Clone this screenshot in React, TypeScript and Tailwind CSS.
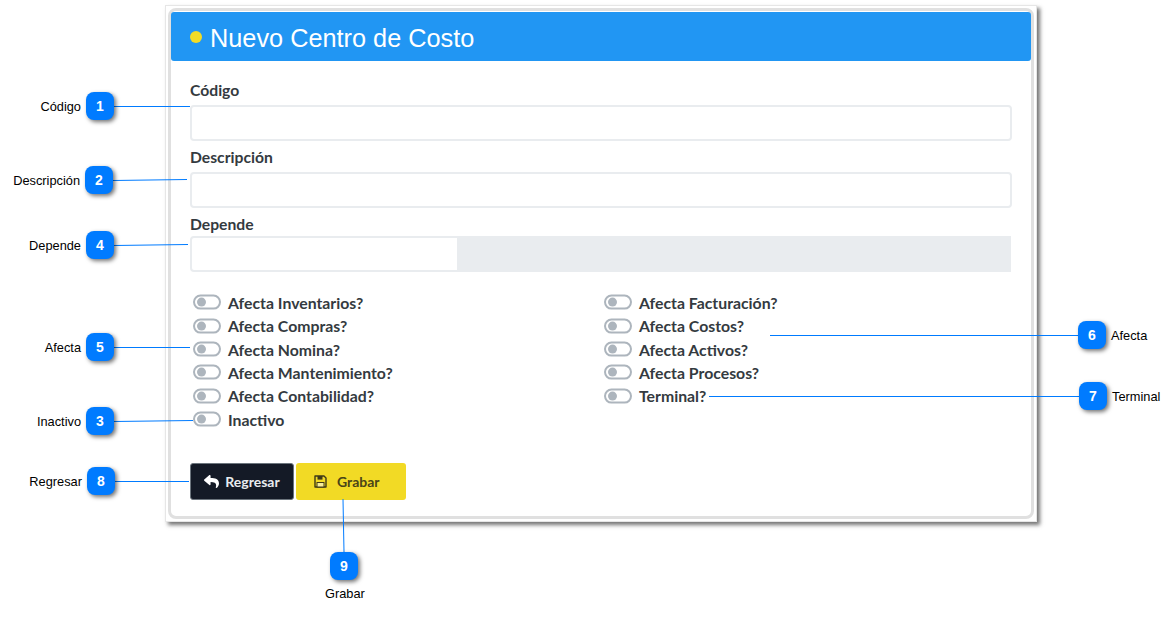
import { FaReply } from "react-icons/fa";

const lines = [
  [114, 106.5, 190, 106.5],
  [113, 180.5, 187, 179.5],
  [114, 245.5, 188, 244.5],
  [114, 347.5, 190, 347.5],
  [114, 421.5, 193, 420.5],
  [115, 481.5, 189, 481.5],
  [344, 552, 343, 499],
  [1078, 335.5, 770, 335.5],
  [1079, 396.5, 709, 396.5],
];

const badges = [
  { n: 1, c: "left-[86px] top-[92px]" },
  { n: 2, c: "left-[85px] top-[166px]" },
  { n: 4, c: "left-[86px] top-[231px]" },
  { n: 5, c: "left-[86px] top-[333px]" },
  { n: 3, c: "left-[86px] top-[407px]" },
  { n: 8, c: "left-[87px] top-[467px]" },
  { n: 9, c: "left-[330px] top-[552px]" },
  { n: 6, c: "left-[1078px] top-[321px]" },
  { n: 7, c: "left-[1079px] top-[382px]" },
];

const notes = [
  { t: "Código", c: "right-[1095px] top-[99px]" },
  { t: "Descripción", c: "right-[1096px] top-[173px]" },
  { t: "Depende", c: "right-[1095px] top-[238px]" },
  { t: "Afecta", c: "right-[1095px] top-[340px]" },
  { t: "Inactivo", c: "right-[1095px] top-[414px]" },
  { t: "Regresar", c: "right-[1094px] top-[474px]" },
  { t: "Grabar", c: "left-[325px] top-[586px]" },
  { t: "Afecta", c: "left-[1111px] top-[328px]" },
  { t: "Terminal", c: "left-[1112px] top-[389px]" },
];

const left = ["Afecta Inventarios?", "Afecta Compras?", "Afecta Nomina?", "Afecta Mantenimiento?", "Afecta Contabilidad?", "Inactivo"];
const right = ["Afecta Facturación?", "Afecta Costos?", "Afecta Activos?", "Afecta Procesos?", "Terminal?"];

function Toggle({ label }: { label: string }) {
  return (
    <div className="flex h-[23.4px] items-center">
      <span className="flex h-[15px] w-[28px] -translate-y-[0.4px] items-center rounded-full border-2 border-[#adb5bd] bg-white pl-[2px]">
        <span className="h-[9px] w-[9px] rounded-full bg-[#adb5bd]" />
      </span>
      <span className="ml-[7px] text-[15.8px] font-bold text-[#343a40]">{label}</span>
    </div>
  );
}

function Label({ text }: { text: string }) {
  return <label className="block h-[26px] pt-[5px] text-[15.7px] leading-[22px] font-bold text-[#343a40]">{text}</label>;
}

function SaveIcon() {
  return (
    <svg width="13" height="13" viewBox="0 0 13 13" fill="none" className="shrink-0">
      <path d="M1 1h9l2 2v9H1z" stroke="#3f3a18" strokeWidth="1.4" strokeLinejoin="round" />
      <rect x="3.5" y="1" width="5" height="3.6" fill="#3f3a18" />
      <rect x="3" y="7.5" width="7" height="4.5" stroke="#3f3a18" strokeWidth="1" fill="#f7ee9a" />
    </svg>
  );
}

export default function App() {
  return (
    <div className="relative h-[617px] w-[1176px] overflow-hidden bg-white font-['Lato',sans-serif]">
      <div className="ml-[165px] pt-[5px]">
        <div className="h-[517px] w-[872px] border border-[#e6e6e6] bg-white p-[2px] shadow-[3px_3px_4px_rgba(0,0,0,0.55)]">
          <div className="flex h-full w-[866px] flex-col rounded-[8px] border-[3px] border-[#e0e0e0] bg-white pt-[1px]">
            <div className="flex h-[49px] items-center rounded-[3px] bg-[#2196f3] pt-[4px] pl-[19px]">
              <span className="h-[12px] w-[12px] -translate-y-[2px] rounded-full bg-[#f2dc26]" />
              <h1 className="ml-[8px] font-['Liberation_Sans',sans-serif] text-[25.3px] text-white">Nuevo Centro de Costo</h1>
            </div>
            <div className="flex flex-1 flex-col px-[19px] pt-[13px]">
              <div className="w-[822px]">
                <Label text="Código" />
                <div className="mt-[5px] h-[36px] rounded-[4px] border-2 border-[#e9ecef] bg-white" />
                <Label text="Descripción" />
                <div className="mt-[5px] h-[36px] rounded-[4px] border-2 border-[#e9ecef] bg-white" />
                <Label text="Depende" />
                <div className="mt-[2px] flex h-[36px] w-[821px]">
                  <div className="w-[269px] shrink-0 rounded-l-[4px] border-2 border-[#e9ecef] bg-white" />
                  <div className="flex-1 bg-[#e9ecef]" />
                </div>
              </div>
              <div className="mt-[19px] grid w-[822px] grid-cols-[411px_411px]">
                <div className="pl-[3px]">
                  {left.map((l) => (
                    <Toggle key={l} label={l} />
                  ))}
                </div>
                <div className="pl-[3px]">
                  {right.map((l) => (
                    <Toggle key={l} label={l} />
                  ))}
                </div>
              </div>
              <div className="mt-[32px] flex gap-[2px]">
                <button className="flex h-[37px] w-[104px] items-center justify-center gap-[6px] rounded-[3px] border border-[#6c757d] bg-[#141a26] text-[14px] font-bold text-[#e9ecef]">
                  <FaReply className="text-[15px] text-white" />
                  Regresar
                </button>
                <button className="flex h-[37px] w-[110px] items-center gap-[10px] rounded-[3px] bg-[#f2da25] pl-[18px] text-[14px] font-bold text-[#4a4418]">
                  <SaveIcon />
                  Grabar
                </button>
              </div>
            </div>
          </div>
        </div>
      </div>

      <svg className="pointer-events-none absolute inset-0" width="1176" height="617">
        {lines.map((l, i) => (
          <line key={i} x1={l[0]} y1={l[1]} x2={l[2]} y2={l[3]} stroke="#007bff" strokeWidth="1" />
        ))}
      </svg>

      {badges.map((b) => (
        <div
          key={b.n}
          className={`absolute flex h-[28px] w-[28px] items-center justify-center rounded-[8px] bg-[#007bff] font-['Liberation_Sans',sans-serif] text-[14px] font-bold text-white shadow-[2px_2px_4px_rgba(0,0,0,0.55)] ${b.c}`}
        >
          {b.n}
        </div>
      ))}

      {notes.map((n) => (
        <div key={n.t + n.c} className={`absolute font-['Liberation_Sans',sans-serif] text-[12.8px] leading-[15px] text-black ${n.c}`}>
          {n.t}
        </div>
      ))}
    </div>
  );
}
